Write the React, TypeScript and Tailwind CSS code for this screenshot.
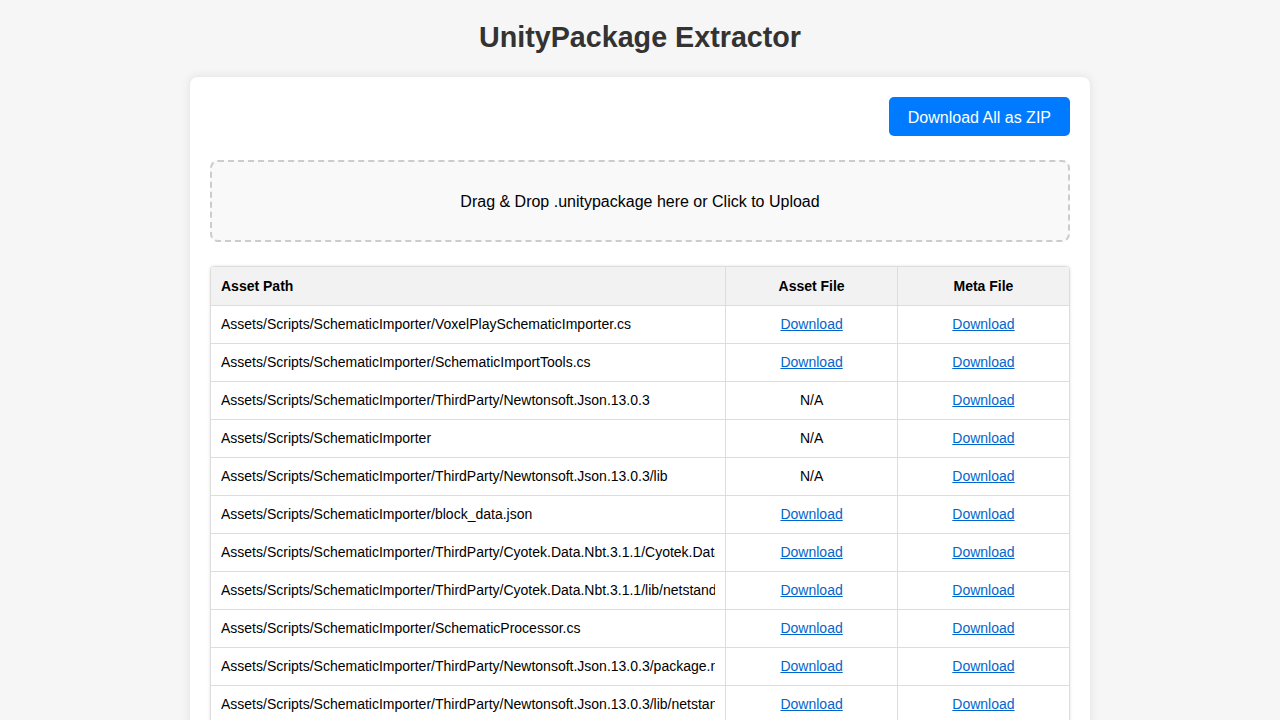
const rows: [string, boolean][] = [
  ["Assets/Scripts/SchematicImporter/VoxelPlaySchematicImporter.cs", true],
  ["Assets/Scripts/SchematicImporter/SchematicImportTools.cs", true],
  ["Assets/Scripts/SchematicImporter/ThirdParty/Newtonsoft.Json.13.0.3", false],
  ["Assets/Scripts/SchematicImporter", false],
  ["Assets/Scripts/SchematicImporter/ThirdParty/Newtonsoft.Json.13.0.3/lib", false],
  ["Assets/Scripts/SchematicImporter/block_data.json", true],
  ["Assets/Scripts/SchematicImporter/ThirdParty/Cyotek.Data.Nbt.3.1.1/Cyotek.Data.Nbt.dll", true],
  ["Assets/Scripts/SchematicImporter/ThirdParty/Cyotek.Data.Nbt.3.1.1/lib/netstandard2.0", true],
  ["Assets/Scripts/SchematicImporter/SchematicProcessor.cs", true],
  ["Assets/Scripts/SchematicImporter/ThirdParty/Newtonsoft.Json.13.0.3/package.nuspec", true],
  ["Assets/Scripts/SchematicImporter/ThirdParty/Newtonsoft.Json.13.0.3/lib/netstandard2.0", true],
  ["Assets/Scripts/SchematicImporter/ThirdParty/Newtonsoft.Json.13.0.3/LICENSE.md", true],
];

const DownloadLink = () => (
  <a href="#" className="text-[#0066cc] underline">
    Download
  </a>
);

export default function App() {
  return (
    <div className="min-h-screen bg-[#f6f6f6] pt-5 pb-10 font-['Liberation_Sans',Arial,sans-serif]">
      <h1 className="text-center text-[28.7px] leading-[34px] font-bold text-[#333] mb-[23px]">
        UnityPackage Extractor
      </h1>

      <div className="mx-auto w-[900px] bg-white rounded-lg shadow-[0_0_10px_rgba(0,0,0,0.1)] p-5">
        <div className="flex justify-end">
          <button className="bg-[#007bff] text-white text-base leading-[19px] px-[19px] pt-[11px] pb-[9px] rounded-[5px]">
            Download All as ZIP
          </button>
        </div>

        <div className="mt-6 border-2 border-dashed border-[#ccc] rounded-lg bg-[#f9f9f9] pt-[31px] pb-[29px] text-center text-base leading-[18px] text-black">
          Drag &amp; Drop .unitypackage here or Click to Upload
        </div>

        <div className="mt-6 border border-[#ddd] rounded shadow-[0_0_3px_rgba(0,0,0,0.12)] overflow-hidden">
          <table className="w-full table-fixed border-collapse text-sm leading-[17px] text-black">
            <colgroup>
              <col className="w-[60%]" />
              <col className="w-[20%]" />
              <col className="w-[20%]" />
            </colgroup>
            <thead>
              <tr className="bg-[#f2f2f2] leading-[18px]">
                <th className="p-[10px] text-left font-bold border-b border-[#ddd]">Asset Path</th>
                <th className="p-[10px] text-center font-bold border-b border-l border-[#ddd]">Asset File</th>
                <th className="p-[10px] text-center font-bold border-b border-l border-[#ddd]">Meta File</th>
              </tr>
            </thead>
            <tbody>
              {rows.map(([path, hasAsset]) => (
                <tr key={path}>
                  <td className="p-[10px] border-b border-[#ddd]">
                    <div className="whitespace-nowrap overflow-hidden">{path}</div>
                  </td>
                  <td className="p-[10px] border-b border-l border-[#ddd] text-center">
                    {hasAsset ? <DownloadLink /> : "N/A"}
                  </td>
                  <td className="p-[10px] border-b border-l border-[#ddd] text-center">
                    <DownloadLink />
                  </td>
                </tr>
              ))}
            </tbody>
          </table>
        </div>
      </div>
    </div>
  );
}
